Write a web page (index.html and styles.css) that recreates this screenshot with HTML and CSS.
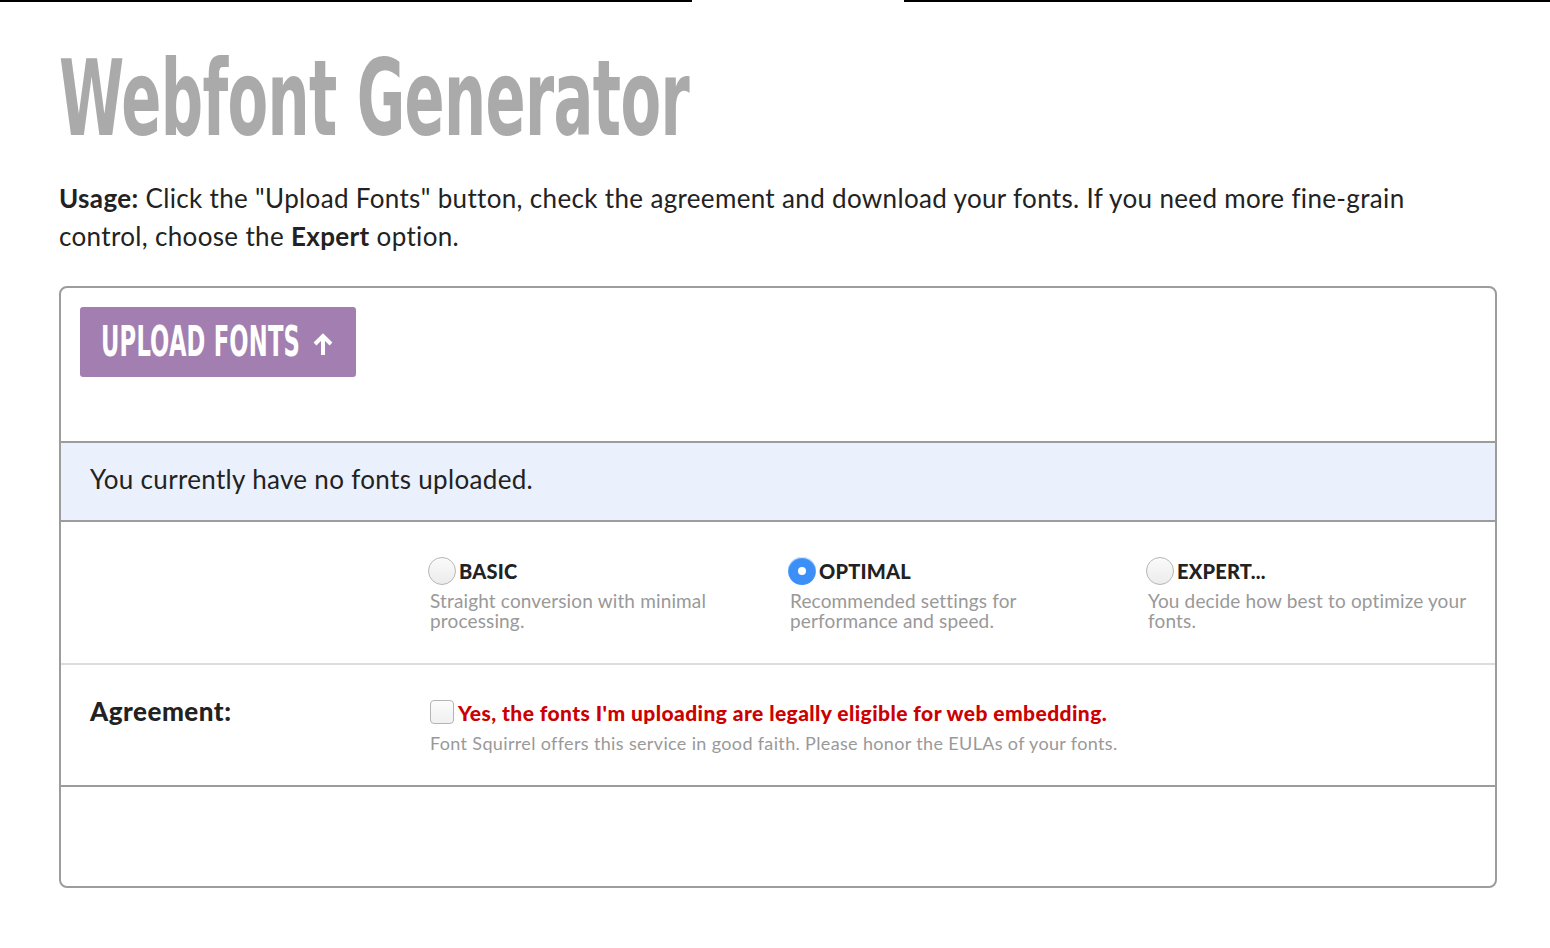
FILE: index.html
```html
<!DOCTYPE html>
<html lang="en">
<head>
<meta charset="utf-8">
<title>Webfont Generator</title>
<link rel="stylesheet" href="styles.css">
</head>
<body>
<div class="topbar"><span class="rule rule-left"></span><span class="rule-gap"></span><span class="rule rule-right"></span></div>
<main class="page">
  <h1 class="title"><span class="title-text">Webfont Generator</span></h1>
  <p class="usage"><strong>Usage:</strong> Click the "Upload Fonts" button, check the agreement and download your fonts. If you need more fine-grain control, choose the <strong>Expert</strong> option.</p>

  <div class="panel">
    <div class="upload-section">
      <button class="upload-btn" type="button"><span class="upload-label">UPLOAD FONTS</span>
        <svg class="upload-icon" width="22" height="24" viewBox="0 0 22 24"><path d="M11 23V4.5M3 12L11 4L19 12" fill="none" stroke="#fff" stroke-width="4" stroke-linecap="butt" stroke-linejoin="miter"/></svg>
      </button>
    </div>
    <div class="status-row">You currently have no fonts uploaded.</div>
    <div class="options-row">
      <div class="row-label"></div>
      <div class="option">
        <div class="option-head"><span class="radio"></span><span class="option-title">BASIC</span></div>
        <div class="option-desc">Straight conversion with minimal processing.</div>
      </div>
      <div class="option">
        <div class="option-head"><span class="radio radio-on"></span><span class="option-title">OPTIMAL</span></div>
        <div class="option-desc">Recommended settings for performance and speed.</div>
      </div>
      <div class="option">
        <div class="option-head"><span class="radio"></span><span class="option-title">EXPERT...</span></div>
        <div class="option-desc">You decide how best to optimize your fonts.</div>
      </div>
    </div>
    <div class="agreement-row">
      <div class="row-label agreement-label">Agreement:</div>
      <div class="agreement-body">
        <div class="agreement-head"><span class="checkbox"></span><span class="agreement-text">Yes, the fonts I'm uploading are legally eligible for web embedding.</span></div>
        <div class="agreement-note">Font Squirrel offers this service in good faith. Please honor the EULAs of your fonts.</div>
      </div>
    </div>
    <div class="footer-row"></div>
  </div>
</main>
</body>
</html>
```

FILE: styles.css
```css
* { box-sizing: border-box; }
html, body { margin: 0; padding: 0; background: #fff; }
body {
  font-family: "Lato", "Noto Sans", sans-serif;
  color: #222;
}
.topbar { display: flex; height: 2px; }
.rule { display: block; height: 2px; background: #000; }
.rule-left { flex: 0 0 692px; }
.rule-gap { flex: 0 0 212px; }
.rule-right { flex: 1 1 auto; }

.page { padding: 0 53px 0 59px; }

.title {
  margin: 0;
  height: 160px;
  padding-top: 38px;
  font-family: "DejaVu Sans Condensed", "Liberation Sans", sans-serif;
  font-stretch: condensed;
  font-weight: bold;
  font-size: 106px;
  line-height: 118px;
  color: #aaa;
  white-space: nowrap;
}
.title-text {
  display: inline-block;
  transform: scaleX(0.62);
  transform-origin: left center;
  letter-spacing: -1px;
}

.usage {
  margin: 17px 0 31px;
  font-size: 26px;
  line-height: 38px;
  letter-spacing: 0.34px;
  color: #222;
  max-width: 1400px;
}
.usage strong { font-weight: bold; }

.panel {
  width: 1438px;
  border: 2px solid #9c9c9c;
  border-radius: 8px;
  overflow: hidden;
}
.upload-section {
  height: 153px;
  padding: 19px 19px;
}
.upload-btn {
  display: flex;
  align-items: center;
  width: 276px;
  height: 70px;
  padding: 0 0 0 21px;
  border: none;
  border-radius: 3px;
  background: #a27fb0;
  color: #fff;
  cursor: pointer;
}
.upload-label {
  display: inline-block;
  font-family: "DejaVu Sans Condensed", "Liberation Sans", sans-serif;
  font-stretch: condensed;
  font-weight: bold;
  font-size: 42px;
  line-height: 42px;
  transform: scaleX(0.6);
  transform-origin: left center;
  width: 196px;
  white-space: nowrap;
  letter-spacing: 0.3px;
}
.upload-icon { margin-left: 15px; margin-top: 3px; }

.status-row {
  height: 81px;
  border-top: 2px solid #9c9c9c;
  border-bottom: 2px solid #9c9c9c;
  background: #eaf1fc;
  padding: 0 0 6px 29px;
  display: flex;
  align-items: center;
  font-size: 26px;
  letter-spacing: 0.33px;
  color: #222;
}

.options-row {
  display: grid;
  grid-template-columns: 367px 360px 358px 1fr;
  height: 143px;
  padding-top: 35px;
  border-bottom: 2px solid #dcdcdc;
}
.option-head { display: flex; align-items: center; height: 28px; }
.radio {
  display: inline-block;
  width: 28px;
  height: 28px;
  border-radius: 50%;
  border: 1px solid #b5b5b5;
  background: linear-gradient(#fafafa, #ececec);
  box-shadow: inset 0 1px 1px rgba(255,255,255,0.9);
  margin-right: 3px;
  flex: none;
}
.radio-on {
  border: none;
  background: #3b8ff7;
  position: relative;
}
.radio-on::after {
  content: "";
  position: absolute;
  left: 10px; top: 10px;
  width: 8px; height: 8px;
  border-radius: 50%;
  background: #fff;
}
.option-title {
  font-weight: 900;
  font-size: 20px;
  color: #222;
  letter-spacing: 0.2px;
}
.option-desc {
  margin-top: 6px;
  padding-left: 2px;
  font-size: 19px;
  line-height: 20px;
  letter-spacing: 0.15px;
  color: #999;
  max-width: 320px;
}

.agreement-row {
  display: grid;
  grid-template-columns: 369px 1fr;
  height: 122px;
  border-bottom: 2px solid #9c9c9c;
  padding-top: 31px;
}
.agreement-label {
  padding-left: 29px;
  font-weight: 900;
  font-size: 26px;
  line-height: 30px;
  letter-spacing: 0.5px;
  color: #222;
}
.agreement-body { padding-top: 3px; }
.agreement-head { display: flex; align-items: center; height: 26px; }
.checkbox {
  display: inline-block;
  width: 24px;
  height: 24px;
  border: 1px solid #b5b5b5;
  border-radius: 4px;
  background: linear-gradient(#fcfcfc, #f0f0f0);
  margin-right: 4px;
  flex: none;
}
.agreement-text {
  font-weight: 900;
  font-size: 21px;
  letter-spacing: 0.42px;
  color: #cc0000;
}
.agreement-note {
  margin-top: 7px;
  font-size: 18px;
  line-height: 22px;
  letter-spacing: 0.35px;
  color: #999;
}
.footer-row { height: 99px; }
```
